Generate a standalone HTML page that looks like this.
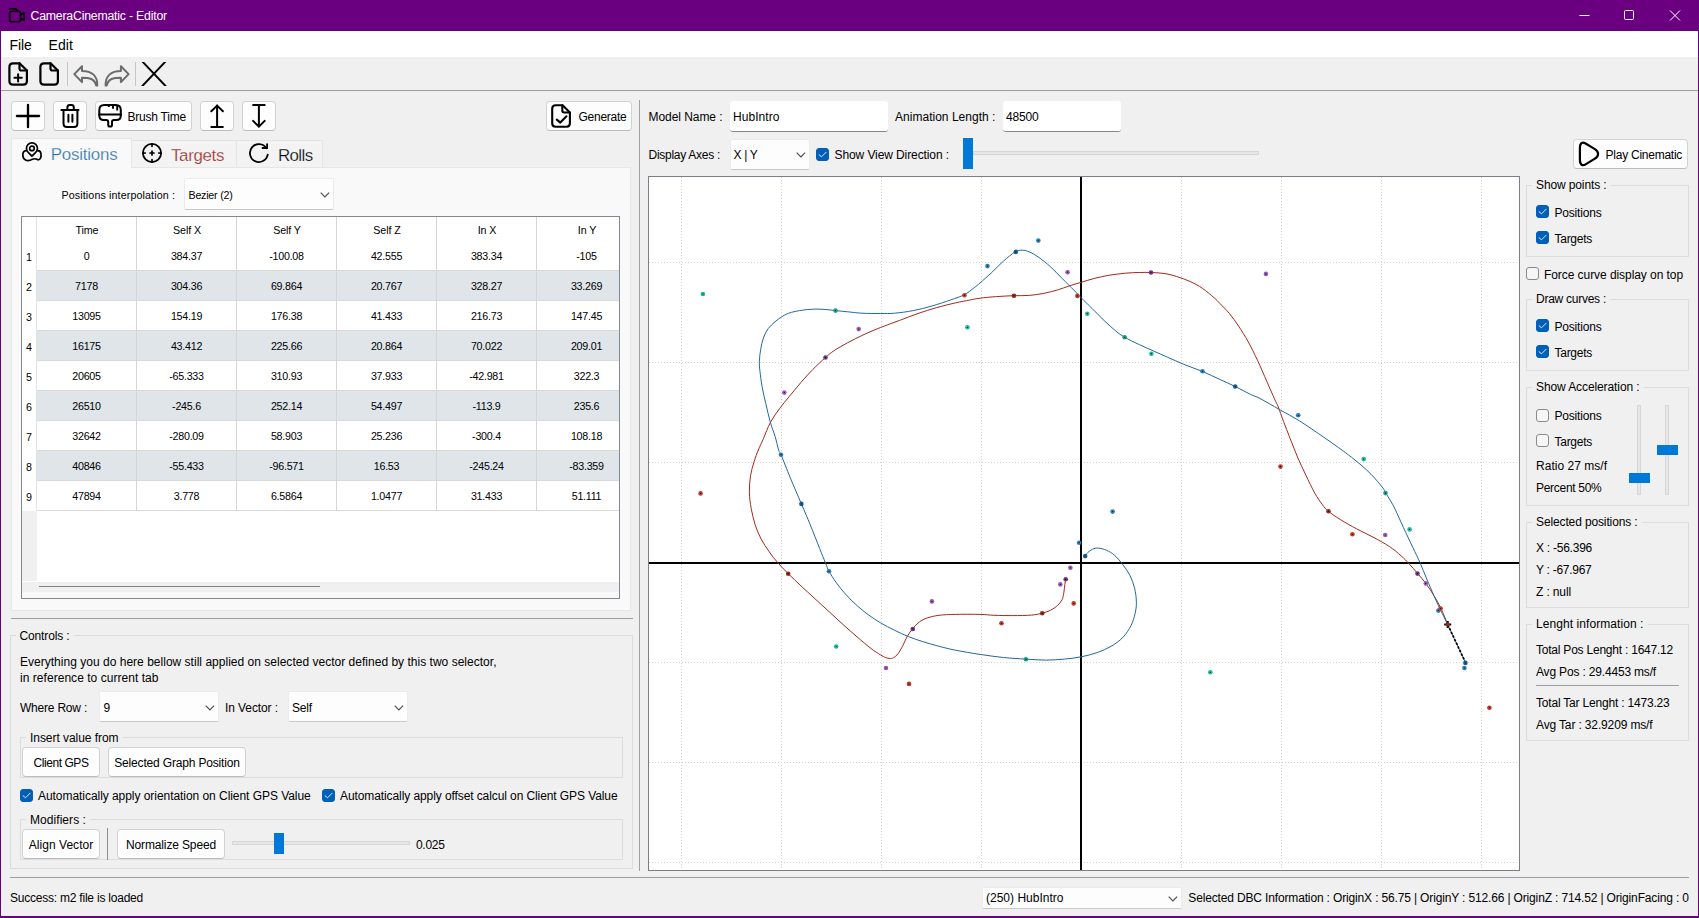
<!DOCTYPE html>
<html lang="en"><head><meta charset="utf-8"><title>CameraCinematic - Editor</title>
<style>
html,body{margin:0;padding:0;}
body{width:1699px;height:918px;overflow:hidden;background:#f0f0f0;font-family:"Liberation Sans",sans-serif;font-size:12px;color:#000;position:relative;}
#app{position:absolute;left:0;top:0;width:1699px;height:918px;overflow:hidden;}
#app div,#app svg{position:absolute;box-sizing:border-box;}
.t{position:absolute;white-space:pre;}
.btn{background:#fdfdfd;border:1px solid #d2d2d2;border-bottom-color:#bcbcbc;border-radius:4px;}
.cmb{background:#fdfdfd;border:1px solid #ebebeb;border-bottom-color:#c9c9c9;border-radius:2px;}
.edit{background:#fff;border:0 solid #fff;border-bottom:1px solid #868686;border-radius:3px;}
.grp{border:1px solid #dcdcdc;}
.cb1{background:#005fb8;border:1px solid #005fb8;border-radius:3px;}
.cb0{background:#f6f6f6;border:1px solid #8a8a8a;border-radius:3px;}
</style></head>
<body><div id="app">
<div style="left:0px;top:0px;width:1699px;height:918px;background:#f0f0f0;"></div>
<div style="left:0px;top:0px;width:1699px;height:31px;background:#6a0080;"></div>
<div style="left:0px;top:31px;width:1px;height:887px;background:#6a0080;"></div>
<div style="left:1698px;top:31px;width:1px;height:887px;background:#6a0080;"></div>
<div style="left:0px;top:916px;width:1699px;height:2px;background:#6a0080;"></div>
<svg style="left:0px;top:0px" width="32" height="31" viewBox="0 0 32 31" fill="none" stroke="#000" stroke-width="1.600" stroke-linecap="round" stroke-linejoin="round"><rect x="9.600" y="11.300" width="11" height="10.500" rx="2.300"/><path d="M20.600 15.200L23 13.300Q24.300 12.500 24.300 14V19Q24.300 20.600 23 19.800L20.600 18"/><path d="M9.600 8.700H14.200Q17 8.700 17.600 11.300"/></svg>
<span class="t" style="left:30.50px;top:7.50px;font-size:12.3px;line-height:16px;color:#fff;letter-spacing:-0.207px;">CameraCinematic - Editor</span>
<svg style="left:1570px;top:0" width="129" height="31" viewBox="0 0 129 31" fill="none" stroke="#fff" stroke-width="1"><path d="M9.5 15.5h10"/><rect x="54.5" y="10.5" width="9" height="9" rx="1"/><path d="M100 10.5l10 10M110 10.5l-10 10"/></svg>
<div style="left:1px;top:31px;width:1697px;height:26px;background:#fff;"></div>
<span class="t" style="left:9.50px;top:35.50px;font-size:14px;line-height:18px;color:#000;letter-spacing:-0.091px;">File</span>
<span class="t" style="left:48.50px;top:35.50px;font-size:14px;line-height:18px;color:#000;letter-spacing:0.119px;">Edit</span>
<div style="left:1px;top:90px;width:1697px;height:1px;background:#a0a0a0;"></div>
<svg style="left:0px;top:0px" width="40" height="92" viewBox="0 0 40 92" fill="none" stroke="#000" stroke-width="2.200" stroke-linecap="round" stroke-linejoin="round"><path d="M19.500 63.400H13Q9.400 63.400 9.400 67V81Q9.400 84.600 13 84.600H23.300Q26.900 84.600 26.900 81V70.600L19.800 63.400"/><path d="M19.500 63.400V68.500Q19.500 70.500 21.500 70.500H26.900"/><path d="M14.400 77.800H21.800M18.100 74.200V81.400" stroke-width="2"/></svg>
<svg style="left:30.9px;top:0px" width="40" height="92" viewBox="0 0 40 92" fill="none" stroke="#000" stroke-width="2.200" stroke-linecap="round" stroke-linejoin="round"><path d="M19.500 63.400H13Q9.400 63.400 9.400 67V81Q9.400 84.600 13 84.600H23.300Q26.900 84.600 26.900 81V70.600L19.800 63.400"/><path d="M19.500 63.400V68.500Q19.500 70.500 21.500 70.500H26.900"/></svg>
<div style="left:67px;top:62px;width:1px;height:24px;background:#c6c6c6;"></div>
<svg style="left:0px;top:0px" width="140" height="92" viewBox="0 0 140 92" fill="none" stroke="#6c6c6c" stroke-width="2" stroke-linejoin="round" stroke-linecap="round"><path d="M82 66.200L74.300 74.100L82 82.100V77.700C89.500 77.700 94.600 78.600 96.200 85.600L97.300 85.600C97.600 75.800 92 71 82 71Z"/><path d="M82 66.200L74.300 74.100L82 82.100V77.700C89.500 77.700 94.600 78.600 96.200 85.600L97.300 85.600C97.600 75.800 92 71 82 71Z" transform="translate(202.900 0) scale(-1 1)"/></svg>
<div style="left:135px;top:62px;width:1px;height:24px;background:#c6c6c6;"></div>
<svg style="left:140px;top:62.200px" width="28" height="23.500" viewBox="140 62.200 28 23.500" fill="none" stroke="#000" stroke-width="1.900"><path d="M141.900 61.200L166 86.700M166 61.200L141.900 86.700"/></svg>
<div class="btn" style="left:11px;top:101px;width:34px;height:30px;"></div>
<svg style="left:14px;top:102px" width="28" height="28" viewBox="0 0 24 24" fill="none" stroke="#000" stroke-width="2" stroke-linecap="round" stroke-linejoin="round" stroke-width="1.700"><path d="M12 2.500v19M2.500 12h19"/></svg>
<div class="btn" style="left:53px;top:101px;width:34px;height:30px;"></div>
<svg style="left:50px;top:98px" width="40" height="36" viewBox="50 98 40 36" fill="none" stroke="#000" stroke-width="2" stroke-linecap="round" stroke-linejoin="round"><path d="M61.400 110H78.500"/><path d="M63.500 110V123.400Q63.500 126.900 67 126.900H73.900Q77.400 126.900 77.400 123.400V110"/><path d="M67.400 110V107.500Q67.400 105.100 69.800 105.100H71.400Q73.800 105.100 73.800 107.500V110"/><path d="M68.400 114.800V121.800M72.400 114.800V121.800"/></svg>
<div class="btn" style="left:95px;top:101px;width:97px;height:30px;"></div>
<svg style="left:95px;top:100px" width="34" height="32" viewBox="95 100 34 32" fill="none" stroke="#000" stroke-width="2" stroke-linecap="round" stroke-linejoin="round"><path d="M99.300 114.400V110.100Q99.300 105.100 104.300 105.100H115.800Q120.800 105.100 120.800 110.100V114.400"/><path d="M99.300 114.400H120.800"/><path d="M99.300 114.400V115.500Q99.300 120 103.800 120H106.200Q108.200 120 108.200 122V124.700a1.900 1.900 0 0 0 3.800 0V122Q112 120 114 120H116.300Q120.800 120 120.800 115.500V114.400"/><path d="M108.800 105.100V107.100M113 105.100V108.700M117.200 105.100V110.500" stroke-linecap="butt" stroke-width="1.900"/></svg>
<span class="t" style="left:127.50px;top:108.50px;font-size:12px;line-height:16px;color:#000;letter-spacing:-0.229px;">Brush Time</span>
<div class="btn" style="left:200px;top:101px;width:34px;height:30px;"></div>
<svg style="left:200px;top:100px" width="34" height="32" viewBox="200 100 34 32" fill="none" stroke="#000" stroke-width="2" stroke-linecap="round" stroke-linejoin="round"><path d="M217.100 105.600V127.100"/><path d="M211.300 111.300L217.100 105.600L222.900 111.300"/><path d="M211.300 127.100H222.900"/></svg>
<div class="btn" style="left:242px;top:101px;width:34px;height:30px;"></div>
<svg style="left:242px;top:100px" width="34" height="32" viewBox="242 100 34 32" fill="none" stroke="#000" stroke-width="2" stroke-linecap="round" stroke-linejoin="round"><path d="M258.900 105V126.600"/><path d="M253.100 120.900L258.900 126.600L264.700 120.900"/><path d="M253.100 105H264.700"/></svg>
<div class="btn" style="left:546px;top:101px;width:86px;height:30px;"></div>
<svg style="left:546px;top:100px" width="30" height="32" viewBox="546 100 30 32" fill="none" stroke="#000" stroke-width="2.100" stroke-linecap="round" stroke-linejoin="round"><path d="M562.300 105.200H555.700Q552.200 105.200 552.200 108.700V123.300Q552.200 126.800 555.700 126.800H566.400Q569.900 126.800 569.900 123.300V112.600L562.600 105.200"/><path d="M562.300 105.200V110.500Q562.300 112.500 564.300 112.500H569.900"/><path d="M556.800 119.600L560.300 122.600L566.500 116.300"/></svg>
<span class="t" style="left:578.50px;top:108.50px;font-size:12px;line-height:16px;color:#000;letter-spacing:-0.256px;">Generate</span>
<div style="left:11px;top:167px;width:620px;height:444px;background:#f9f9f9;border:1px solid #e6e6e6;"></div>
<div style="left:131px;top:140px;width:106px;height:28px;background:#f3f3f3;border:1px solid #e4e4e4;border-bottom:1px solid #e6e6e6;"></div>
<div style="left:236px;top:140px;width:87px;height:28px;background:#f3f3f3;border:1px solid #e4e4e4;border-bottom:1px solid #e6e6e6;"></div>
<div style="left:11px;top:138px;width:121px;height:30px;background:#f9f9f9;border:1px solid #e6e6e6;border-bottom:none;border-radius:2px 2px 0 0;"></div>
<svg style="left:20px;top:140px" width="24" height="24" viewBox="0 0 24 24" fill="none" stroke="#000" stroke-width="1.700" stroke-linecap="round" stroke-linejoin="round"><circle cx="11.940" cy="8.400" r="2.300"/><path d="M11.940 16.100L8.390 12.570A5.500 5.500 0 1 1 15.490 12.570Z"/><path d="M6.100 10.700C3.600 10.900 2.800 12.900 2.800 15C2.800 17.500 4 19.300 6 20.200C8 21.100 10.500 20.300 12.500 19.300C14 18.600 15.600 18.600 16.800 19.300C18.200 20.100 19.600 19.800 20.400 18.400C21.200 17 21.200 15.500 21 14C20.800 12 19.800 10.800 17.800 10.700"/></svg>
<span class="t" style="left:50.80px;top:144.00px;font-size:16.9px;line-height:22px;color:#2b73a8;letter-spacing:-0.205px;-webkit-text-stroke:0.250px #f9f9f9;">Positions</span>
<svg style="left:140px;top:141px" width="24" height="24" viewBox="0 0 24 24" fill="none" stroke="#000" stroke-width="1.700" stroke-linecap="round" stroke-linejoin="round"><circle cx="12" cy="12" r="9.100" stroke-width="1.800"/><path d="M12 3v2.300"/><path d="M12 18.700v2.300"/><path d="M3 12h2.300"/><path d="M18.700 12h2.300"/><path d="M10 12h4"/><path d="M12 10v4"/></svg>
<span class="t" style="left:171.00px;top:145.00px;font-size:16.9px;line-height:22px;color:#932a1e;letter-spacing:-0.342px;-webkit-text-stroke:0.250px #f3f3f3;">Targets</span>
<svg style="left:244px;top:138px" width="30" height="30" viewBox="244 138 30 30" fill="none" stroke="#000" stroke-width="1.800" stroke-linecap="round" stroke-linejoin="round"><path d="M266.400 148.200A8.950 8.950 0 1 0 267.700 154.650"/><path d="M267.100 144.100V148H262.500"/></svg>
<span class="t" style="left:278.00px;top:145.00px;font-size:16.9px;line-height:22px;color:#000;letter-spacing:-0.609px;-webkit-text-stroke:0.250px #f3f3f3;">Rolls</span>
<span class="t" style="left:61.50px;top:188.00px;font-size:10.7px;line-height:14px;color:#000;letter-spacing:0.119px;">Positions interpolation :</span>
<div class="cmb" style="left:184px;top:178px;width:150px;height:32px;"></div>
<svg style="left:320px;top:192.2px" width="10" height="6" viewBox="0 0 10 6" fill="none" stroke="#4a4a4a" stroke-width="1.100"><path d="M0.700 0.600L4.900 4.900L9.100 0.600"/></svg>
<span class="t" style="left:188.50px;top:188.00px;font-size:10.7px;line-height:14px;color:#000;letter-spacing:-0.233px;">Bezier (2)</span>
<div style="left:21px;top:216px;width:599px;height:383px;background:#fff;border:1px solid #828790;"></div>
<div style="left:37px;top:270px;width:582px;height:1px;background:#d9d9d9;"></div>
<div style="left:37px;top:271px;width:582px;height:30px;background:#dfe5e9;"></div>
<div style="left:37px;top:300px;width:582px;height:1px;background:#d9d9d9;"></div>
<div style="left:37px;top:330px;width:582px;height:1px;background:#d9d9d9;"></div>
<div style="left:37px;top:331px;width:582px;height:30px;background:#dfe5e9;"></div>
<div style="left:37px;top:360px;width:582px;height:1px;background:#d9d9d9;"></div>
<div style="left:37px;top:390px;width:582px;height:1px;background:#d9d9d9;"></div>
<div style="left:37px;top:391px;width:582px;height:30px;background:#dfe5e9;"></div>
<div style="left:37px;top:420px;width:582px;height:1px;background:#d9d9d9;"></div>
<div style="left:37px;top:450px;width:582px;height:1px;background:#d9d9d9;"></div>
<div style="left:37px;top:451px;width:582px;height:30px;background:#dfe5e9;"></div>
<div style="left:37px;top:480px;width:582px;height:1px;background:#d9d9d9;"></div>
<div style="left:37px;top:510px;width:582px;height:1px;background:#d9d9d9;"></div>
<div style="left:136px;top:217px;width:1px;height:294px;background:#d6d6d6;"></div>
<div style="left:236px;top:217px;width:1px;height:294px;background:#d6d6d6;"></div>
<div style="left:336px;top:217px;width:1px;height:294px;background:#d6d6d6;"></div>
<div style="left:436px;top:217px;width:1px;height:294px;background:#d6d6d6;"></div>
<div style="left:536px;top:217px;width:1px;height:294px;background:#d6d6d6;"></div>
<div style="left:36px;top:217px;width:1px;height:294px;background:#e4e4e4;"></div>
<div style="left:22px;top:511px;width:15px;height:70px;background:#f0f0f0;"></div>
<div style="left:22px;top:582px;width:597px;height:10px;background:#f0f0f0;"></div>
<div style="left:22px;top:592px;width:597px;height:6px;background:#f9f9f9;"></div>
<div style="left:39px;top:585.7px;width:281px;height:1.2px;background:#808080;"></div>
<span class="t" style="left:75.52px;top:223.00px;font-size:10.7px;line-height:14px;color:#000;letter-spacing:-0.100px;">Time</span>
<span class="t" style="left:173.04px;top:223.00px;font-size:10.7px;line-height:14px;color:#000;letter-spacing:-0.100px;">Self X</span>
<span class="t" style="left:273.14px;top:223.00px;font-size:10.7px;line-height:14px;color:#000;letter-spacing:-0.100px;">Self Y</span>
<span class="t" style="left:373.34px;top:223.00px;font-size:10.7px;line-height:14px;color:#000;letter-spacing:-0.100px;">Self Z</span>
<span class="t" style="left:477.69px;top:223.00px;font-size:10.7px;line-height:14px;color:#000;letter-spacing:-0.100px;">In X</span>
<span class="t" style="left:577.79px;top:223.00px;font-size:10.7px;line-height:14px;color:#000;letter-spacing:-0.100px;">In Y</span>
<span class="t" style="left:26.02px;top:250.00px;font-size:10.7px;line-height:14px;color:#000;">1</span>
<span class="t" style="left:83.65px;top:249.30px;font-size:10.7px;line-height:14px;color:#000;letter-spacing:-0.250px;">0</span>
<span class="t" style="left:170.90px;top:249.30px;font-size:10.7px;line-height:14px;color:#000;letter-spacing:-0.250px;">384.37</span>
<span class="t" style="left:269.25px;top:249.30px;font-size:10.7px;line-height:14px;color:#000;letter-spacing:-0.250px;">-100.08</span>
<span class="t" style="left:370.90px;top:249.30px;font-size:10.7px;line-height:14px;color:#000;letter-spacing:-0.250px;">42.555</span>
<span class="t" style="left:470.90px;top:249.30px;font-size:10.7px;line-height:14px;color:#000;letter-spacing:-0.250px;">383.34</span>
<span class="t" style="left:576.30px;top:249.30px;font-size:10.7px;line-height:14px;color:#000;letter-spacing:-0.250px;">-105</span>
<span class="t" style="left:26.02px;top:280.00px;font-size:10.7px;line-height:14px;color:#000;">2</span>
<span class="t" style="left:75.11px;top:279.30px;font-size:10.7px;line-height:14px;color:#000;letter-spacing:-0.250px;">7178</span>
<span class="t" style="left:170.90px;top:279.30px;font-size:10.7px;line-height:14px;color:#000;letter-spacing:-0.250px;">304.36</span>
<span class="t" style="left:270.90px;top:279.30px;font-size:10.7px;line-height:14px;color:#000;letter-spacing:-0.250px;">69.864</span>
<span class="t" style="left:370.90px;top:279.30px;font-size:10.7px;line-height:14px;color:#000;letter-spacing:-0.250px;">20.767</span>
<span class="t" style="left:470.90px;top:279.30px;font-size:10.7px;line-height:14px;color:#000;letter-spacing:-0.250px;">328.27</span>
<span class="t" style="left:570.90px;top:279.30px;font-size:10.7px;line-height:14px;color:#000;letter-spacing:-0.250px;">33.269</span>
<span class="t" style="left:26.02px;top:310.00px;font-size:10.7px;line-height:14px;color:#000;">3</span>
<span class="t" style="left:72.26px;top:309.30px;font-size:10.7px;line-height:14px;color:#000;letter-spacing:-0.250px;">13095</span>
<span class="t" style="left:170.90px;top:309.30px;font-size:10.7px;line-height:14px;color:#000;letter-spacing:-0.250px;">154.19</span>
<span class="t" style="left:270.90px;top:309.30px;font-size:10.7px;line-height:14px;color:#000;letter-spacing:-0.250px;">176.38</span>
<span class="t" style="left:370.90px;top:309.30px;font-size:10.7px;line-height:14px;color:#000;letter-spacing:-0.250px;">41.433</span>
<span class="t" style="left:470.90px;top:309.30px;font-size:10.7px;line-height:14px;color:#000;letter-spacing:-0.250px;">216.73</span>
<span class="t" style="left:570.90px;top:309.30px;font-size:10.7px;line-height:14px;color:#000;letter-spacing:-0.250px;">147.45</span>
<span class="t" style="left:26.02px;top:340.00px;font-size:10.7px;line-height:14px;color:#000;">4</span>
<span class="t" style="left:72.26px;top:339.30px;font-size:10.7px;line-height:14px;color:#000;letter-spacing:-0.250px;">16175</span>
<span class="t" style="left:170.90px;top:339.30px;font-size:10.7px;line-height:14px;color:#000;letter-spacing:-0.250px;">43.412</span>
<span class="t" style="left:270.90px;top:339.30px;font-size:10.7px;line-height:14px;color:#000;letter-spacing:-0.250px;">225.66</span>
<span class="t" style="left:370.90px;top:339.30px;font-size:10.7px;line-height:14px;color:#000;letter-spacing:-0.250px;">20.864</span>
<span class="t" style="left:470.90px;top:339.30px;font-size:10.7px;line-height:14px;color:#000;letter-spacing:-0.250px;">70.022</span>
<span class="t" style="left:570.90px;top:339.30px;font-size:10.7px;line-height:14px;color:#000;letter-spacing:-0.250px;">209.01</span>
<span class="t" style="left:26.02px;top:370.00px;font-size:10.7px;line-height:14px;color:#000;">5</span>
<span class="t" style="left:72.26px;top:369.30px;font-size:10.7px;line-height:14px;color:#000;letter-spacing:-0.250px;">20605</span>
<span class="t" style="left:169.25px;top:369.30px;font-size:10.7px;line-height:14px;color:#000;letter-spacing:-0.250px;">-65.333</span>
<span class="t" style="left:270.90px;top:369.30px;font-size:10.7px;line-height:14px;color:#000;letter-spacing:-0.250px;">310.93</span>
<span class="t" style="left:370.90px;top:369.30px;font-size:10.7px;line-height:14px;color:#000;letter-spacing:-0.250px;">37.933</span>
<span class="t" style="left:469.25px;top:369.30px;font-size:10.7px;line-height:14px;color:#000;letter-spacing:-0.250px;">-42.981</span>
<span class="t" style="left:573.75px;top:369.30px;font-size:10.7px;line-height:14px;color:#000;letter-spacing:-0.250px;">322.3</span>
<span class="t" style="left:26.02px;top:400.00px;font-size:10.7px;line-height:14px;color:#000;">6</span>
<span class="t" style="left:72.26px;top:399.30px;font-size:10.7px;line-height:14px;color:#000;letter-spacing:-0.250px;">26510</span>
<span class="t" style="left:172.09px;top:399.30px;font-size:10.7px;line-height:14px;color:#000;letter-spacing:-0.250px;">-245.6</span>
<span class="t" style="left:270.90px;top:399.30px;font-size:10.7px;line-height:14px;color:#000;letter-spacing:-0.250px;">252.14</span>
<span class="t" style="left:370.90px;top:399.30px;font-size:10.7px;line-height:14px;color:#000;letter-spacing:-0.250px;">54.497</span>
<span class="t" style="left:472.49px;top:399.30px;font-size:10.7px;line-height:14px;color:#000;letter-spacing:-0.250px;">-113.9</span>
<span class="t" style="left:573.75px;top:399.30px;font-size:10.7px;line-height:14px;color:#000;letter-spacing:-0.250px;">235.6</span>
<span class="t" style="left:26.02px;top:430.00px;font-size:10.7px;line-height:14px;color:#000;">7</span>
<span class="t" style="left:72.26px;top:429.30px;font-size:10.7px;line-height:14px;color:#000;letter-spacing:-0.250px;">32642</span>
<span class="t" style="left:169.25px;top:429.30px;font-size:10.7px;line-height:14px;color:#000;letter-spacing:-0.250px;">-280.09</span>
<span class="t" style="left:270.90px;top:429.30px;font-size:10.7px;line-height:14px;color:#000;letter-spacing:-0.250px;">58.903</span>
<span class="t" style="left:370.90px;top:429.30px;font-size:10.7px;line-height:14px;color:#000;letter-spacing:-0.250px;">25.236</span>
<span class="t" style="left:472.09px;top:429.30px;font-size:10.7px;line-height:14px;color:#000;letter-spacing:-0.250px;">-300.4</span>
<span class="t" style="left:570.90px;top:429.30px;font-size:10.7px;line-height:14px;color:#000;letter-spacing:-0.250px;">108.18</span>
<span class="t" style="left:26.02px;top:460.00px;font-size:10.7px;line-height:14px;color:#000;">8</span>
<span class="t" style="left:72.26px;top:459.30px;font-size:10.7px;line-height:14px;color:#000;letter-spacing:-0.250px;">40846</span>
<span class="t" style="left:169.25px;top:459.30px;font-size:10.7px;line-height:14px;color:#000;letter-spacing:-0.250px;">-55.433</span>
<span class="t" style="left:269.25px;top:459.30px;font-size:10.7px;line-height:14px;color:#000;letter-spacing:-0.250px;">-96.571</span>
<span class="t" style="left:373.75px;top:459.30px;font-size:10.7px;line-height:14px;color:#000;letter-spacing:-0.250px;">16.53</span>
<span class="t" style="left:469.25px;top:459.30px;font-size:10.7px;line-height:14px;color:#000;letter-spacing:-0.250px;">-245.24</span>
<span class="t" style="left:569.25px;top:459.30px;font-size:10.7px;line-height:14px;color:#000;letter-spacing:-0.250px;">-83.359</span>
<span class="t" style="left:26.02px;top:490.00px;font-size:10.7px;line-height:14px;color:#000;">9</span>
<span class="t" style="left:72.26px;top:489.30px;font-size:10.7px;line-height:14px;color:#000;letter-spacing:-0.250px;">47894</span>
<span class="t" style="left:173.75px;top:489.30px;font-size:10.7px;line-height:14px;color:#000;letter-spacing:-0.250px;">3.778</span>
<span class="t" style="left:270.90px;top:489.30px;font-size:10.7px;line-height:14px;color:#000;letter-spacing:-0.250px;">6.5864</span>
<span class="t" style="left:370.90px;top:489.30px;font-size:10.7px;line-height:14px;color:#000;letter-spacing:-0.250px;">1.0477</span>
<span class="t" style="left:470.90px;top:489.30px;font-size:10.7px;line-height:14px;color:#000;letter-spacing:-0.250px;">31.433</span>
<span class="t" style="left:571.70px;top:489.30px;font-size:10.7px;line-height:14px;color:#000;letter-spacing:-0.250px;">51.111</span>
<div style="left:11px;top:618px;width:622px;height:1px;background:#a0a0a0;"></div>
<div class="grp" style="left:10px;top:635px;width:623px;height:234px;"></div>
<span class="t" style="left:19.50px;top:627.80px;font-size:12px;line-height:16px;color:#000;letter-spacing:-0.136px;background:#f0f0f0;padding:0 4px;margin-left:-4px;">Controls :</span>
<span class="t" style="left:20.00px;top:653.50px;font-size:12px;line-height:16px;color:#000;letter-spacing:0.017px;">Everything you do here bellow still applied on selected vector defined by this two selector,</span>
<span class="t" style="left:20.00px;top:669.80px;font-size:12px;line-height:16px;color:#000;letter-spacing:0.040px;">in reference to current tab</span>
<span class="t" style="left:20.00px;top:699.50px;font-size:12px;line-height:16px;color:#000;letter-spacing:-0.214px;">Where Row :</span>
<div class="cmb" style="left:99px;top:691px;width:120px;height:31.4px;"></div>
<svg style="left:205px;top:704.9000000000001px" width="10" height="6" viewBox="0 0 10 6" fill="none" stroke="#4a4a4a" stroke-width="1.100"><path d="M0.700 0.600L4.900 4.900L9.100 0.600"/></svg>
<span class="t" style="left:103.50px;top:699.50px;font-size:12px;line-height:16px;color:#000;">9</span>
<span class="t" style="left:225.00px;top:699.50px;font-size:12px;line-height:16px;color:#000;letter-spacing:-0.094px;">In Vector :</span>
<div class="cmb" style="left:288px;top:691px;width:120px;height:31.4px;"></div>
<svg style="left:394px;top:704.9000000000001px" width="10" height="6" viewBox="0 0 10 6" fill="none" stroke="#4a4a4a" stroke-width="1.100"><path d="M0.700 0.600L4.900 4.900L9.100 0.600"/></svg>
<span class="t" style="left:292.00px;top:699.50px;font-size:12px;line-height:16px;color:#000;letter-spacing:-0.172px;">Self</span>
<div class="grp" style="left:20px;top:737.3px;width:603px;height:40.3px;"></div>
<span class="t" style="left:30.00px;top:730.10px;font-size:12px;line-height:16px;color:#000;letter-spacing:-0.051px;background:#f0f0f0;padding:0 4px;margin-left:-4px;">Insert value from</span>
<div class="btn" style="left:22px;top:747.3px;width:78px;height:29.5px;"></div>
<span class="t" style="left:33.50px;top:755.00px;font-size:12px;line-height:16px;color:#000;letter-spacing:-0.436px;">Client GPS</span>
<div class="btn" style="left:108px;top:747.3px;width:138px;height:29.5px;"></div>
<span class="t" style="left:114.25px;top:755.00px;font-size:12px;line-height:16px;color:#000;letter-spacing:-0.171px;">Selected Graph Position</span>
<div class="cb1" style="left:20px;top:789.0px;width:13px;height:13px;"></div>
<svg style="left:20px;top:789.0px" width="13" height="13" viewBox="0 0 13 13" fill="none" stroke="#fff" stroke-opacity="0.920" stroke-width="0.950" stroke-linecap="round" stroke-linejoin="round"><path d="M3.100 6.800L5.500 8.800L10.100 4.200"/></svg>
<span class="t" style="left:38.00px;top:787.50px;font-size:12px;line-height:16px;color:#000;letter-spacing:-0.050px;">Automatically apply orientation on Client GPS Value</span>
<div class="cb1" style="left:322px;top:789.0px;width:13px;height:13px;"></div>
<svg style="left:322px;top:789.0px" width="13" height="13" viewBox="0 0 13 13" fill="none" stroke="#fff" stroke-opacity="0.920" stroke-width="0.950" stroke-linecap="round" stroke-linejoin="round"><path d="M3.100 6.800L5.500 8.800L10.100 4.200"/></svg>
<span class="t" style="left:340.00px;top:787.50px;font-size:12px;line-height:16px;color:#000;letter-spacing:-0.092px;">Automatically apply offset calcul on Client GPS Value</span>
<div class="grp" style="left:20px;top:819px;width:603px;height:40.7px;"></div>
<span class="t" style="left:30.00px;top:811.80px;font-size:12px;line-height:16px;color:#000;letter-spacing:0.058px;background:#f0f0f0;padding:0 4px;margin-left:-4px;">Modifiers :</span>
<div class="btn" style="left:22px;top:829.2px;width:78px;height:29.8px;"></div>
<span class="t" style="left:28.75px;top:836.80px;font-size:12px;line-height:16px;color:#000;letter-spacing:0.038px;">Align Vector</span>
<div style="left:107.3px;top:828px;width:1px;height:31.5px;background:#8c8c8c;"></div>
<div class="btn" style="left:117px;top:829.2px;width:108px;height:29.8px;"></div>
<span class="t" style="left:126.00px;top:836.80px;font-size:12px;line-height:16px;color:#000;letter-spacing:-0.136px;">Normalize Speed</span>
<div style="left:232px;top:841px;width:178px;height:4px;background:#e7e7e7;border:1px solid #d6d6d6;"></div>
<div style="left:274px;top:833px;width:10px;height:21px;background:#0078d7;"></div>
<span class="t" style="left:416.00px;top:836.50px;font-size:12px;line-height:16px;color:#000;letter-spacing:-0.306px;">0.025</span>
<div style="left:10px;top:877px;width:1679px;height:1px;background:#a0a0a0;"></div>
<span class="t" style="left:10.00px;top:890.00px;font-size:12px;line-height:16px;color:#000;letter-spacing:-0.221px;">Success: m2 file is loaded</span>
<div style="left:639px;top:100px;width:1px;height:771px;background:#a0a0a0;"></div>
<span class="t" style="left:648.50px;top:108.80px;font-size:12px;line-height:16px;color:#000;letter-spacing:-0.059px;">Model Name :</span>
<div class="edit" style="left:730px;top:101px;width:158px;height:30.5px;"></div>
<span class="t" style="left:733.00px;top:108.80px;font-size:12px;line-height:16px;color:#000;letter-spacing:0.059px;">HubIntro</span>
<span class="t" style="left:895.00px;top:108.80px;font-size:12px;line-height:16px;color:#000;letter-spacing:0.023px;">Animation Length :</span>
<div class="edit" style="left:1003px;top:101px;width:118px;height:30.5px;"></div>
<span class="t" style="left:1006.00px;top:108.80px;font-size:12px;line-height:16px;color:#000;letter-spacing:-0.175px;">48500</span>
<span class="t" style="left:648.50px;top:146.60px;font-size:12px;line-height:16px;color:#000;letter-spacing:-0.277px;">Display Axes :</span>
<div class="cmb" style="left:730px;top:138.5px;width:79.5px;height:31.5px;"></div>
<svg style="left:795.5px;top:152.45px" width="10" height="6" viewBox="0 0 10 6" fill="none" stroke="#4a4a4a" stroke-width="1.100"><path d="M0.700 0.600L4.900 4.900L9.100 0.600"/></svg>
<span class="t" style="left:733.50px;top:146.60px;font-size:12px;line-height:16px;color:#000;letter-spacing:-0.316px;">X | Y</span>
<div class="cb1" style="left:816px;top:147.5px;width:13px;height:13px;"></div>
<svg style="left:816px;top:147.5px" width="13" height="13" viewBox="0 0 13 13" fill="none" stroke="#fff" stroke-opacity="0.920" stroke-width="0.950" stroke-linecap="round" stroke-linejoin="round"><path d="M3.100 6.800L5.500 8.800L10.100 4.200"/></svg>
<span class="t" style="left:834.50px;top:146.60px;font-size:12px;line-height:16px;color:#000;letter-spacing:-0.095px;">Show View Direction :</span>
<div style="left:973px;top:151px;width:286px;height:4px;background:#e7e7e7;border:1px solid #d6d6d6;"></div>
<div style="left:963px;top:138px;width:10px;height:31px;background:#0078d7;"></div>
<div class="btn" style="left:1573px;top:139px;width:115px;height:30px;"></div>
<svg style="left:1574px;top:138px" width="30" height="32" viewBox="1574 138 30 32" fill="none" stroke="#000" stroke-width="2.200" stroke-linecap="round" stroke-linejoin="round"><path d="M1579.900 148V159.800C1579.900 165.300 1582.500 166.200 1586 164.100L1594.500 158.900C1599.300 156 1599.300 151.800 1594.500 148.900L1586 143.700C1582.500 141.600 1579.900 142.500 1579.900 148Z"/></svg>
<span class="t" style="left:1605.60px;top:146.60px;font-size:12px;line-height:16px;color:#000;letter-spacing:-0.252px;">Play Cinematic</span>
<div class="grp" style="left:1526px;top:184.5px;width:163px;height:72px;"></div>
<span class="t" style="left:1536.00px;top:177.30px;font-size:12px;line-height:16px;color:#000;letter-spacing:-0.119px;background:#f0f0f0;padding:0 4px;margin-left:-4px;">Show points :</span>
<div class="cb1" style="left:1536px;top:205.0px;width:13px;height:13px;"></div>
<svg style="left:1536px;top:205.0px" width="13" height="13" viewBox="0 0 13 13" fill="none" stroke="#fff" stroke-opacity="0.920" stroke-width="0.950" stroke-linecap="round" stroke-linejoin="round"><path d="M3.100 6.800L5.500 8.800L10.100 4.200"/></svg>
<span class="t" style="left:1554.50px;top:204.80px;font-size:12px;line-height:16px;color:#000;letter-spacing:-0.189px;">Positions</span>
<div class="cb1" style="left:1536px;top:231.0px;width:13px;height:13px;"></div>
<svg style="left:1536px;top:231.0px" width="13" height="13" viewBox="0 0 13 13" fill="none" stroke="#fff" stroke-opacity="0.920" stroke-width="0.950" stroke-linecap="round" stroke-linejoin="round"><path d="M3.100 6.800L5.500 8.800L10.100 4.200"/></svg>
<span class="t" style="left:1554.50px;top:230.80px;font-size:12px;line-height:16px;color:#000;letter-spacing:-0.266px;">Targets</span>
<div class="cb0" style="left:1526px;top:267.2px;width:13px;height:13px;"></div>
<span class="t" style="left:1544.00px;top:266.80px;font-size:12px;line-height:16px;color:#000;letter-spacing:-0.067px;">Force curve display on top</span>
<div class="grp" style="left:1526px;top:298.5px;width:163px;height:72px;"></div>
<span class="t" style="left:1536.00px;top:291.30px;font-size:12px;line-height:16px;color:#000;letter-spacing:-0.258px;background:#f0f0f0;padding:0 4px;margin-left:-4px;">Draw curves :</span>
<div class="cb1" style="left:1536px;top:319.0px;width:13px;height:13px;"></div>
<svg style="left:1536px;top:319.0px" width="13" height="13" viewBox="0 0 13 13" fill="none" stroke="#fff" stroke-opacity="0.920" stroke-width="0.950" stroke-linecap="round" stroke-linejoin="round"><path d="M3.100 6.800L5.500 8.800L10.100 4.200"/></svg>
<span class="t" style="left:1554.50px;top:318.80px;font-size:12px;line-height:16px;color:#000;letter-spacing:-0.189px;">Positions</span>
<div class="cb1" style="left:1536px;top:345.0px;width:13px;height:13px;"></div>
<svg style="left:1536px;top:345.0px" width="13" height="13" viewBox="0 0 13 13" fill="none" stroke="#fff" stroke-opacity="0.920" stroke-width="0.950" stroke-linecap="round" stroke-linejoin="round"><path d="M3.100 6.800L5.500 8.800L10.100 4.200"/></svg>
<span class="t" style="left:1554.50px;top:344.80px;font-size:12px;line-height:16px;color:#000;letter-spacing:-0.266px;">Targets</span>
<div class="grp" style="left:1526px;top:386.5px;width:163px;height:119px;"></div>
<span class="t" style="left:1536.00px;top:379.30px;font-size:12px;line-height:16px;color:#000;letter-spacing:-0.100px;background:#f0f0f0;padding:0 4px;margin-left:-4px;">Show Acceleration :</span>
<div class="cb0" style="left:1536px;top:408.5px;width:13px;height:13px;"></div>
<span class="t" style="left:1554.50px;top:408.20px;font-size:12px;line-height:16px;color:#000;letter-spacing:-0.189px;">Positions</span>
<div class="cb0" style="left:1536px;top:434.0px;width:13px;height:13px;"></div>
<span class="t" style="left:1554.50px;top:434.00px;font-size:12px;line-height:16px;color:#000;letter-spacing:-0.266px;">Targets</span>
<span class="t" style="left:1536.00px;top:458.20px;font-size:12px;line-height:16px;color:#000;letter-spacing:0.023px;">Ratio 27 ms/f</span>
<span class="t" style="left:1536.00px;top:480.00px;font-size:12px;line-height:16px;color:#000;letter-spacing:-0.293px;">Percent 50%</span>
<div style="left:1637px;top:405px;width:4px;height:90px;background:#e7e7e7;border:1px solid #d6d6d6;"></div>
<div style="left:1665px;top:405px;width:4px;height:90px;background:#e7e7e7;border:1px solid #d6d6d6;"></div>
<div style="left:1629px;top:473px;width:21px;height:10px;background:#0078d7;"></div>
<div style="left:1657px;top:445px;width:21px;height:10px;background:#0078d7;"></div>
<div class="grp" style="left:1526px;top:521.5px;width:163px;height:86px;"></div>
<span class="t" style="left:1536.00px;top:514.30px;font-size:12px;line-height:16px;color:#000;letter-spacing:-0.128px;background:#f0f0f0;padding:0 4px;margin-left:-4px;">Selected positions :</span>
<span class="t" style="left:1536.00px;top:539.60px;font-size:12px;line-height:16px;color:#000;letter-spacing:-0.247px;">X : -56.396</span>
<span class="t" style="left:1536.00px;top:561.60px;font-size:12px;line-height:16px;color:#000;letter-spacing:-0.273px;">Y : -67.967</span>
<span class="t" style="left:1536.00px;top:584.00px;font-size:12px;line-height:16px;color:#000;letter-spacing:-0.127px;">Z : null</span>
<div class="grp" style="left:1526px;top:623.5px;width:163px;height:117px;"></div>
<span class="t" style="left:1536.00px;top:616.30px;font-size:12px;line-height:16px;color:#000;letter-spacing:0.071px;background:#f0f0f0;padding:0 4px;margin-left:-4px;">Lenght information :</span>
<span class="t" style="left:1536.00px;top:641.50px;font-size:12px;line-height:16px;color:#000;letter-spacing:-0.222px;">Total Pos Lenght : 1647.12</span>
<span class="t" style="left:1536.00px;top:663.50px;font-size:12px;line-height:16px;color:#000;letter-spacing:-0.175px;">Avg Pos : 29.4453 ms/f</span>
<div style="left:1536px;top:685px;width:143px;height:1px;background:#a0a0a0;"></div>
<span class="t" style="left:1536.00px;top:694.80px;font-size:12px;line-height:16px;color:#000;letter-spacing:-0.195px;">Total Tar Lenght : 1473.23</span>
<span class="t" style="left:1536.00px;top:717.00px;font-size:12px;line-height:16px;color:#000;letter-spacing:-0.142px;">Avg Tar : 32.9209 ms/f</span>
<div class="cmb" style="left:982px;top:886.5px;width:200px;height:22px;"></div>
<svg style="left:1168px;top:895.7px" width="10" height="6" viewBox="0 0 10 6" fill="none" stroke="#4a4a4a" stroke-width="1.100"><path d="M0.700 0.600L4.900 4.900L9.100 0.600"/></svg>
<span class="t" style="left:986.00px;top:890.00px;font-size:12px;line-height:16px;color:#000;letter-spacing:0.009px;">(250) HubIntro</span>
<span class="t" style="left:1188.30px;top:890.00px;font-size:12px;line-height:16px;color:#000;letter-spacing:-0.150px;">Selected DBC Information : OriginX : 56.75 | OriginY : 512.66 | OriginZ : 714.52 | OriginFacing : 0</span>
<svg style="left:648px;top:176px" width="872" height="695" viewBox="0 0 872 695"><rect x="0" y="0" width="872" height="695" fill="#fff"/><path d="M33.5 1V694M133.5 1V694M233.5 1V694M333.5 1V694M533.5 1V694M633.5 1V694M733.5 1V694M833.5 1V694M1 86.5H871M1 186.5H871M1 286.5H871M1 486.5H871M1 586.5H871M1 686.5H871" stroke="#d4d4d4" stroke-width="1" stroke-dasharray="1 2" fill="none" shape-rendering="crispEdges"/><rect x="432" y="1" width="2" height="693" fill="#000"/><rect x="1" y="386" width="870" height="2" fill="#000"/><path d="M417.7 403.3C417.6 404.2 417.1 406.4 416.8 408.7C416.5 411.0 416.3 414.4 415.8 416.9C415.3 419.4 415.1 421.8 414.0 423.9C412.9 426.0 411.2 428.0 409.3 429.7C407.3 431.5 404.8 433.1 402.3 434.4C399.8 435.6 397.2 436.4 394.1 437.2C391.0 438.0 388.4 438.7 383.5 439.1C378.6 439.5 371.0 439.6 364.8 439.6C358.6 439.6 351.6 439.5 346.1 439.3C340.6 439.1 338.4 438.5 332.0 438.4C325.6 438.2 314.3 438.2 307.5 438.4C300.7 438.5 295.8 438.7 291.1 439.3C286.4 439.9 282.7 440.8 279.4 441.9C276.1 443.0 273.6 444.3 271.2 446.1C268.8 447.9 266.8 450.1 264.8 452.5C262.8 454.9 261.1 457.4 259.4 460.2C257.7 463.1 256.3 466.7 254.8 469.6C253.2 472.5 251.7 475.7 250.1 477.7C248.5 479.7 246.8 480.9 245.4 481.7C244.0 482.5 243.2 482.5 241.9 482.5C240.6 482.5 239.1 482.1 237.5 481.5C235.9 480.9 234.9 480.4 232.5 478.9C230.1 477.4 227.0 475.6 223.1 472.6C219.2 469.6 213.8 464.9 209.1 460.9C204.4 456.9 199.7 452.7 195.0 448.5C190.3 444.3 185.7 439.9 181.0 435.6C176.3 431.3 171.6 427.0 166.9 422.7C162.2 418.4 157.4 414.0 152.9 409.8C148.4 405.6 143.9 401.3 140.0 397.4C136.1 393.5 132.6 390.0 129.5 386.4C126.4 382.8 124.0 379.8 121.3 375.9C118.6 372.0 115.5 367.5 113.1 363.0C110.8 358.5 108.9 354.0 107.2 348.9C105.6 343.8 104.2 337.9 103.2 332.5C102.2 327.1 101.5 321.6 101.4 316.2C101.3 310.8 101.7 304.9 102.5 299.8C103.3 294.7 104.8 290.0 106.1 285.7C107.4 281.4 108.7 277.8 110.3 274.0C111.8 270.2 113.4 267.3 115.4 262.7C117.4 258.1 119.7 251.5 122.4 246.4C125.1 241.3 128.7 236.6 131.8 232.3C134.9 228.0 137.7 224.9 141.2 220.6C144.7 216.3 149.0 211.0 152.9 206.5C156.8 202.0 160.5 197.9 164.6 193.7C168.7 189.5 174.0 184.6 177.5 181.5C181.0 178.4 182.0 177.4 185.7 174.9C189.4 172.4 194.6 169.4 199.7 166.7C204.8 164.0 210.6 161.0 216.1 158.5C221.6 156.0 226.6 153.8 232.5 151.5C238.4 149.2 245.0 146.8 251.3 144.5C257.5 142.2 263.8 139.7 270.0 137.5C276.2 135.3 282.5 133.4 288.7 131.6C295.0 129.8 302.0 128.1 307.5 126.9C313.0 125.6 317.4 124.9 321.5 124.1C325.6 123.3 327.5 122.8 332.0 122.2C336.5 121.6 342.7 121.0 348.4 120.6C354.1 120.2 360.5 119.9 366.0 119.7C371.5 119.5 376.3 119.8 381.2 119.4C386.1 119.0 390.5 118.4 395.2 117.5C399.9 116.6 405.0 115.2 409.3 114.0C413.6 112.8 417.0 111.3 421.0 110.0C425.0 108.7 428.9 107.6 433.2 106.3C437.5 105.0 442.2 103.5 446.8 102.3C451.4 101.1 455.7 100.2 460.8 99.3C465.9 98.5 472.1 97.7 477.2 97.2C482.3 96.7 487.0 96.6 491.3 96.5C495.6 96.4 498.7 96.3 503.0 96.5C507.3 96.7 512.7 96.9 517.0 97.6C521.3 98.3 524.4 99.1 528.7 100.5C533.0 101.9 538.5 103.8 542.8 105.8C547.1 107.8 550.6 109.7 554.5 112.4C558.4 115.1 563.3 119.3 566.2 121.8C569.1 124.3 569.5 125.0 572.0 127.6C574.5 130.2 578.3 133.7 581.4 137.5C584.5 141.3 587.6 145.6 590.7 150.3C593.8 155.0 597.0 159.9 600.1 165.6C603.2 171.3 606.4 177.7 609.5 184.3C612.6 190.9 616.0 199.0 618.8 205.4C621.6 211.8 624.6 218.6 626.5 222.9C628.4 227.2 628.8 227.2 630.3 231.0C631.8 234.8 633.5 240.2 635.5 245.4C637.5 250.6 639.7 256.3 642.1 262.4C644.5 268.5 647.3 275.9 649.9 282.0C652.5 288.1 655.0 293.1 657.8 299.0C660.6 304.9 664.1 312.3 666.9 317.3C669.7 322.3 672.2 325.8 674.5 328.8C676.8 331.8 677.5 332.9 680.5 335.3C683.5 337.8 687.6 340.6 692.3 343.5C697.0 346.4 703.2 350.0 708.7 352.9C714.2 355.8 719.5 358.2 725.0 361.1C730.5 364.0 736.7 367.4 741.4 370.5C746.1 373.6 749.8 376.9 753.1 379.8C756.4 382.7 758.6 385.1 761.3 388.0C764.0 390.9 766.8 394.2 769.5 397.4C772.2 400.6 775.0 403.5 777.7 407.2C780.4 410.9 783.4 415.4 785.9 419.6C788.5 423.8 790.7 427.7 793.0 432.5C795.3 437.3 798.6 445.9 799.7 448.6" stroke="#a3291c" stroke-width="1" fill="none"/><path d="M437.2 380.1C437.6 379.5 438.5 377.7 439.7 376.6C440.9 375.5 442.6 374.0 444.4 373.3C446.2 372.5 447.9 371.9 450.3 372.1C452.6 372.3 455.8 373.0 458.5 374.2C461.2 375.4 464.0 377.0 466.7 379.4C469.4 381.8 472.4 385.5 474.9 388.8C477.4 392.1 480.0 395.4 481.9 399.3C483.9 403.2 485.5 407.7 486.6 412.2C487.7 416.7 488.3 421.9 488.4 426.2C488.5 430.5 487.9 434.0 487.0 437.9C486.1 441.8 485.0 445.7 483.0 449.6C481.0 453.5 478.2 457.9 474.9 461.4C471.6 464.8 467.4 467.8 463.1 470.3C458.8 472.8 454.1 474.9 449.1 476.6C444.1 478.4 438.7 479.7 433.2 480.8C427.7 481.9 422.2 482.6 416.3 483.1C410.4 483.7 404.0 484.1 397.6 484.1C391.2 484.1 384.9 483.5 377.9 483.1C370.9 482.7 363.1 482.3 355.4 481.5C347.7 480.7 340.0 479.6 332.0 478.4C324.0 477.2 314.3 475.6 307.5 474.2C300.7 472.9 296.6 471.7 291.1 470.3C285.6 468.9 279.8 467.2 274.7 465.6C269.6 464.0 265.3 462.6 260.6 460.7C255.9 458.8 251.3 456.6 246.6 454.3C241.9 452.0 236.8 449.3 232.5 446.8C228.2 444.3 224.7 441.9 220.8 439.1C216.9 436.3 213.0 433.2 209.1 429.7C205.2 426.2 200.9 421.9 197.4 418.0C193.9 414.1 190.7 410.1 188.0 406.3C185.3 402.5 182.8 398.5 181.0 395.3C179.2 392.1 179.1 390.7 177.5 386.9C175.9 383.1 174.1 378.7 171.6 372.4C169.1 366.1 165.3 356.3 162.3 348.9C159.3 341.5 156.7 335.7 153.4 327.9C150.1 320.1 145.8 310.3 142.4 302.1C139.0 293.9 135.0 283.4 133.0 278.7C131.0 274.0 131.6 277.1 130.6 274.0C129.6 270.9 128.5 265.0 127.1 260.4C125.7 255.8 123.9 251.9 122.4 246.4C120.8 240.9 119.2 233.5 117.8 227.6C116.4 221.7 115.2 216.7 114.2 211.2C113.2 205.7 112.4 199.1 111.9 194.8C111.4 190.5 111.3 189.0 111.4 185.5C111.5 182.0 111.9 177.7 112.6 173.8C113.3 169.9 114.1 165.5 115.4 162.0C116.6 158.5 118.2 155.4 120.1 152.7C122.1 150.0 124.8 147.7 127.1 145.7C129.5 143.7 131.5 142.1 134.2 140.5C136.9 138.9 139.2 137.5 143.5 136.3C147.8 135.1 154.8 134.0 159.9 133.5C165.0 133.0 169.4 133.0 174.0 133.2C178.6 133.4 183.2 134.2 187.5 134.6C191.8 135.0 195.3 135.4 199.7 135.8C204.1 136.2 208.3 136.9 213.8 137.2C219.3 137.5 227.0 137.5 232.5 137.5C238.0 137.5 241.1 137.7 246.6 137.2C252.1 136.7 259.1 135.8 265.3 134.6C271.5 133.4 277.8 131.8 284.0 130.0C290.2 128.2 297.4 125.8 302.8 123.9C308.2 122.0 312.5 120.7 316.4 118.7C320.3 116.7 323.6 113.6 326.2 111.7C328.8 109.7 329.1 109.5 332.0 107.0C334.9 104.5 339.8 100.1 343.7 96.5C347.6 92.9 351.5 88.6 355.4 85.2C359.3 81.8 364.0 77.7 367.1 75.9C370.2 74.1 371.9 74.2 374.2 74.2C376.6 74.2 378.5 74.7 381.2 75.9C383.9 77.1 387.0 78.7 390.5 81.2C394.0 83.6 398.4 87.1 402.3 90.6C406.2 94.1 410.1 98.4 414.0 102.3C417.9 106.2 422.5 110.8 425.7 114.0C428.9 117.2 430.1 118.7 433.2 121.8C436.3 124.9 440.6 129.0 444.4 132.8C448.2 136.6 452.2 140.8 456.1 144.5C460.0 148.2 464.4 152.2 467.8 155.0C471.2 157.8 472.8 159.0 476.7 161.3C480.6 163.6 486.5 166.3 491.3 168.6C496.1 170.9 500.6 172.8 505.3 174.9C510.0 177.0 514.3 179.0 519.4 181.2C524.5 183.4 529.9 185.9 535.7 188.3C541.6 190.7 548.5 193.0 554.5 195.5C560.5 198.0 566.5 201.0 572.0 203.5C577.5 206.0 582.1 208.0 587.2 210.5C592.3 213.0 598.3 216.3 602.4 218.3C606.5 220.3 607.1 219.9 612.0 222.5C616.9 225.1 625.1 229.9 631.6 233.6C638.1 237.3 644.7 240.7 651.2 244.7C657.7 248.7 664.3 253.3 670.8 257.8C677.3 262.3 685.0 267.6 690.4 271.5C695.9 275.4 699.6 278.2 703.5 281.3C707.4 284.4 710.7 287.0 714.0 289.8C717.3 292.6 720.5 295.7 723.1 298.3C725.7 300.9 727.6 303.2 729.6 305.5C731.6 307.8 733.5 310.1 734.9 312.0C736.3 313.9 736.5 314.8 737.8 317.0C739.1 319.2 741.1 322.3 742.7 325.1C744.3 327.9 745.2 329.2 747.3 333.6C749.4 338.0 752.6 345.4 755.5 351.7C758.4 358.0 762.2 365.8 764.9 371.6C767.6 377.4 769.6 381.1 771.9 386.4C774.2 391.7 776.6 397.8 778.9 403.3C781.2 408.8 783.8 414.7 785.9 419.6C788.1 424.5 789.5 427.7 791.8 432.5C794.1 437.3 795.5 439.7 799.7 448.6C803.9 457.5 814.2 479.5 817.1 485.7" stroke="#21699c" stroke-width="1" fill="none"/><path d="M799.7 448.6L817.0999999999999 485.70000000000005" stroke="#000" stroke-width="1.700" stroke-dasharray="2.500 1.500" fill="none"/><circle cx="54.9" cy="118.0" r="2.3" fill="#1abc9c"/><circle cx="54.9" cy="118.0" r="0.6" fill="#111"/><circle cx="187.5" cy="134.6" r="2.3" fill="#16a085"/><circle cx="187.5" cy="134.6" r="0.6" fill="#111"/><circle cx="210.7" cy="153.1" r="2.3" fill="#9b59b6"/><circle cx="210.7" cy="153.1" r="0.6" fill="#111"/><circle cx="177.5" cy="181.5" r="2.3" fill="#6c3483"/><circle cx="177.5" cy="181.5" r="0.6" fill="#111"/><circle cx="136.3" cy="216.6" r="2.3" fill="#9b59b6"/><circle cx="136.3" cy="216.6" r="0.6" fill="#111"/><circle cx="316.4" cy="119.2" r="2.3" fill="#c0392b"/><circle cx="316.4" cy="119.2" r="0.6" fill="#111"/><circle cx="319.4" cy="151.3" r="2.3" fill="#1abc9c"/><circle cx="319.4" cy="151.3" r="0.6" fill="#111"/><circle cx="339.5" cy="90.1" r="2.3" fill="#2980b9"/><circle cx="339.5" cy="90.1" r="0.6" fill="#111"/><circle cx="367.8" cy="75.9" r="2.3" fill="#1f5f8b"/><circle cx="367.8" cy="75.9" r="0.6" fill="#111"/><circle cx="390.3" cy="64.6" r="2.3" fill="#2980b9"/><circle cx="390.3" cy="64.6" r="0.6" fill="#111"/><circle cx="419.6" cy="96.2" r="2.3" fill="#9b59b6"/><circle cx="419.6" cy="96.2" r="0.6" fill="#111"/><circle cx="503.0" cy="96.5" r="2.3" fill="#6c3483"/><circle cx="503.0" cy="96.5" r="0.6" fill="#111"/><circle cx="366.0" cy="119.7" r="2.3" fill="#922b21"/><circle cx="366.0" cy="119.7" r="0.6" fill="#111"/><circle cx="429.4" cy="119.9" r="2.3" fill="#c0392b"/><circle cx="429.4" cy="119.9" r="0.6" fill="#111"/><circle cx="439.3" cy="137.7" r="2.3" fill="#1abc9c"/><circle cx="439.3" cy="137.7" r="0.6" fill="#111"/><circle cx="476.7" cy="161.3" r="2.3" fill="#16a085"/><circle cx="476.7" cy="161.3" r="0.6" fill="#111"/><circle cx="503.4" cy="177.7" r="2.3" fill="#1abc9c"/><circle cx="503.4" cy="177.7" r="0.6" fill="#111"/><circle cx="554.5" cy="195.3" r="2.3" fill="#2980b9"/><circle cx="554.5" cy="195.3" r="0.6" fill="#111"/><circle cx="617.9" cy="97.9" r="2.3" fill="#9b59b6"/><circle cx="617.9" cy="97.9" r="0.6" fill="#111"/><circle cx="587.2" cy="210.5" r="2.3" fill="#1f5f8b"/><circle cx="587.2" cy="210.5" r="0.6" fill="#111"/><circle cx="650.2" cy="239.3" r="2.3" fill="#2980b9"/><circle cx="650.2" cy="239.3" r="0.6" fill="#111"/><circle cx="133.0" cy="278.7" r="2.3" fill="#2980b9"/><circle cx="133.0" cy="278.7" r="0.6" fill="#111"/><circle cx="153.4" cy="327.9" r="2.3" fill="#1f5f8b"/><circle cx="153.4" cy="327.9" r="0.6" fill="#111"/><circle cx="181.0" cy="395.3" r="2.3" fill="#2980b9"/><circle cx="181.0" cy="395.3" r="0.6" fill="#111"/><circle cx="140.2" cy="397.7" r="2.3" fill="#922b21"/><circle cx="140.2" cy="397.7" r="0.6" fill="#111"/><circle cx="188.2" cy="470.5" r="2.3" fill="#1abc9c"/><circle cx="188.2" cy="470.5" r="0.6" fill="#111"/><circle cx="283.9" cy="425.4" r="2.3" fill="#9b59b6"/><circle cx="283.9" cy="425.4" r="0.6" fill="#111"/><circle cx="264.8" cy="453.0" r="2.3" fill="#6c3483"/><circle cx="264.8" cy="453.0" r="0.6" fill="#111"/><circle cx="464.6" cy="335.6" r="2.3" fill="#2980b9"/><circle cx="464.6" cy="335.6" r="0.6" fill="#111"/><circle cx="431.1" cy="366.7" r="2.3" fill="#2980b9"/><circle cx="431.1" cy="366.7" r="0.6" fill="#111"/><circle cx="437.2" cy="380.1" r="2.3" fill="#1f5f8b"/><circle cx="437.2" cy="380.1" r="0.6" fill="#111"/><circle cx="422.4" cy="391.8" r="2.3" fill="#9b59b6"/><circle cx="422.4" cy="391.8" r="0.6" fill="#111"/><circle cx="417.7" cy="403.3" r="2.3" fill="#6c3483"/><circle cx="417.7" cy="403.3" r="0.6" fill="#111"/><circle cx="412.3" cy="408.4" r="2.3" fill="#9b59b6"/><circle cx="412.3" cy="408.4" r="0.6" fill="#111"/><circle cx="425.7" cy="427.4" r="2.3" fill="#c0392b"/><circle cx="425.7" cy="427.4" r="0.6" fill="#111"/><circle cx="394.2" cy="437.3" r="2.3" fill="#922b21"/><circle cx="394.2" cy="437.3" r="0.6" fill="#111"/><circle cx="353.5" cy="447.3" r="2.3" fill="#c0392b"/><circle cx="353.5" cy="447.3" r="0.6" fill="#111"/><circle cx="378.0" cy="483.3" r="2.3" fill="#16a085"/><circle cx="378.0" cy="483.3" r="0.6" fill="#111"/><circle cx="238.0" cy="492.0" r="2.3" fill="#9b59b6"/><circle cx="238.0" cy="492.0" r="0.6" fill="#111"/><circle cx="261.0" cy="507.9" r="2.3" fill="#c0392b"/><circle cx="261.0" cy="507.9" r="0.6" fill="#111"/><circle cx="52.6" cy="317.4" r="2.3" fill="#c0392b"/><circle cx="52.6" cy="317.4" r="0.6" fill="#111"/><circle cx="632.5" cy="290.6" r="2.3" fill="#c0392b"/><circle cx="632.5" cy="290.6" r="0.6" fill="#111"/><circle cx="715.7" cy="283.1" r="2.3" fill="#1abc9c"/><circle cx="715.7" cy="283.1" r="0.6" fill="#111"/><circle cx="737.5" cy="317.1" r="2.3" fill="#16a085"/><circle cx="737.5" cy="317.1" r="0.6" fill="#111"/><circle cx="680.5" cy="335.3" r="2.3" fill="#922b21"/><circle cx="680.5" cy="335.3" r="0.6" fill="#111"/><circle cx="704.4" cy="358.3" r="2.3" fill="#c0392b"/><circle cx="704.4" cy="358.3" r="0.6" fill="#111"/><circle cx="737.2" cy="359.0" r="2.3" fill="#9b59b6"/><circle cx="737.2" cy="359.0" r="0.6" fill="#111"/><circle cx="761.6" cy="353.4" r="2.3" fill="#1abc9c"/><circle cx="761.6" cy="353.4" r="0.6" fill="#111"/><circle cx="769.5" cy="397.6" r="2.3" fill="#6c3483"/><circle cx="769.5" cy="397.6" r="0.6" fill="#111"/><circle cx="777.8" cy="407.4" r="2.3" fill="#9b59b6"/><circle cx="777.8" cy="407.4" r="0.6" fill="#111"/><circle cx="790.4" cy="434.6" r="2.3" fill="#2980b9"/><circle cx="790.4" cy="434.6" r="0.6" fill="#111"/><circle cx="792.6" cy="432.5" r="2.3" fill="#c0392b"/><circle cx="792.6" cy="432.5" r="0.6" fill="#111"/><circle cx="817.4" cy="486.9" r="2.3" fill="#1f5f8b"/><circle cx="817.4" cy="486.9" r="0.6" fill="#111"/><circle cx="816.4" cy="492.0" r="2.3" fill="#2980b9"/><circle cx="816.4" cy="492.0" r="0.6" fill="#111"/><circle cx="841.4" cy="531.7" r="2.3" fill="#c0392b"/><circle cx="841.4" cy="531.7" r="0.6" fill="#111"/><circle cx="562.3" cy="496.3" r="2.3" fill="#1abc9c"/><circle cx="562.3" cy="496.3" r="0.6" fill="#111"/><path d="M796.2 448.6h7M799.7 445.1v7" stroke="#000" stroke-width="2"/><circle cx="799.7" cy="448.6" r="2" fill="#922b21"/><rect x="0.5" y="0.5" width="871" height="694" fill="none" stroke="#7a7f87" stroke-width="1"/></svg>
</div></body></html>
